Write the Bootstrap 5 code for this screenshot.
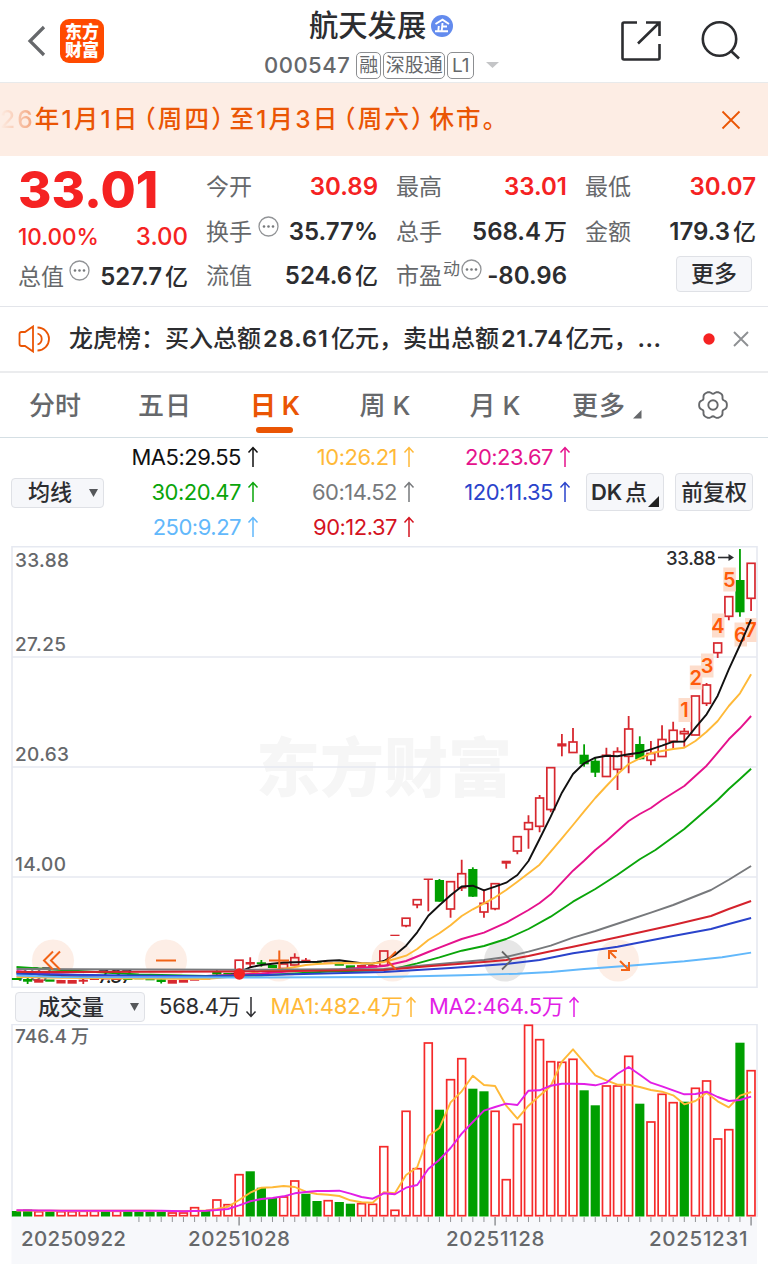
<!DOCTYPE html>
<html lang="zh-CN">
<head>
<meta charset="utf-8">
<meta name="viewport" content="width=device-width, initial-scale=1">
<title>航天发展 000547</title>
<link rel="stylesheet" href="https://cdn.jsdelivr.net/npm/bootstrap@5.3.0/dist/css/bootstrap.min.css">
<style>
body{font-family:Inter,"Noto Sans CJK SC",sans-serif;color:#2c2d30;background:#fff;width:768px;height:1264px;overflow:hidden;font-feature-settings:"calt" 0}
svg{display:block;flex:none}
.topbar{height:83px;border-bottom:1px solid #e8eaeb}
.logo{width:44px;height:44px;border-radius:9px;background:#ff4a00;color:#fff;font-size:17px;font-weight:900;line-height:18px;padding-top:4px;margin-left:12px}
.stockname{font-size:29.3px;line-height:36px;font-weight:500}
.stockmeta{font-size:22px;line-height:28px;color:#66686b;letter-spacing:.5px;font-weight:500}
.tagbox{border:1.5px solid #8c8e91;border-radius:5px;font-size:19px;line-height:25px;height:27px;letter-spacing:0;font-weight:400;text-align:center}
.notice{height:73px;background:#fdede4;color:#ea5504;font-size:24.5px;font-weight:500;letter-spacing:2.15px;line-height:73px;white-space:nowrap}
.notice .fade26{background:linear-gradient(90deg,#fdede4,#f3a47c);-webkit-background-clip:text;color:transparent}
.pl,.pr{font-feature-settings:"halt" 1}
.pl{margin-left:4px}.pr{margin-right:4px}
.quote{height:151px;border-bottom:1px solid #e3e5ea;padding:9px 12px 0 18px;font-size:24px;font-weight:600}
.quote .line{height:44.5px;line-height:44.5px}
.quote .lb{color:#66686b;font-weight:400;font-size:23px}
.quote .cj{font-weight:500;font-size:23px;margin-left:3px}
.up{color:#f52222}
.price{font-size:51px;font-weight:800;line-height:50px;height:50px}
.morebtn{width:76px;height:36px;line-height:35px;font-size:23px;border:1px solid #dfe1e6;border-radius:4px;background:#f6f7fa;font-weight:500}
.news{height:66px;border-bottom:2px solid #ebecee;padding:0 19px 0 18px;font-size:24px;font-weight:500}
.news b{font-weight:600;font-size:23.5px}
.tabs{height:65px;border-bottom:1px solid #d5dfe4;font-size:26px;font-weight:500;color:#66686b;line-height:65px}
.tabs .tab{width:110px;text-align:center}
.tabs .on{color:#ea5504;font-weight:600}
.tabs .on::after{content:"";position:absolute;left:36px;bottom:4px;width:37px;height:6px;border-radius:3px;background:#ea5504}
.malist{height:108px;font-size:22px;line-height:35px;padding-top:2px}
.malist .mc{width:156px;letter-spacing:-.5px}
.pill{background:#f6f7fa;border:1px solid #dfe1e6;border-radius:4px;font-size:22px;font-weight:500;white-space:nowrap}
.volhead{height:36px;font-size:22px;line-height:36px;padding-left:15px}
</style>
</head>
<body>
<header class="topbar d-flex position-relative">
  <div class="d-flex align-items-center" style="padding-left:27px">
    <svg width="21" height="34" viewBox="0 0 21 34"><path d="M17 3 3 17 17 31" fill="none" stroke="#66686b" stroke-width="3.200"/></svg>
    <div class="logo text-center">东方<br>财富</div>
  </div>
  <div class="position-absolute" style="left:264px;top:8px">
    <div class="d-flex align-items-center stockname" style="padding-left:45px">航天发展
      <svg width="22" height="22" viewBox="0 0 22 22" style="margin-left:5px"><circle cx="11" cy="11" r="11" fill="#638bee"/><path d="M4.500 9 11.500 4.700 18 9M11.500 8l-.8 8M11.500 11.500h4.500M7.800 11l-.5 5M4 16.300h13" fill="none" stroke="#fff" stroke-width="1.900"/></svg>
    </div>
    <div class="d-flex align-items-center stockmeta" style="margin-top:7px">000547
      <span class="tagbox" style="margin-left:6px;width:25px">融</span><span class="tagbox" style="margin-left:2px;width:62px">深股通</span><span class="tagbox" style="margin-left:2px;width:27px">L1</span>
      <svg width="13" height="8" style="margin-left:12px"><path d="M0 1H13L6.500 7z" fill="#c4c5c7"/></svg>
    </div>
  </div>
  <div class="d-flex ms-auto align-items-start" style="padding:20px 27px 0 0;gap:39px">
    <svg width="42" height="42" viewBox="0 0 42 42" fill="none" stroke="#2c2d30" stroke-width="2.600"><path d="M17 2.500H4Q2.500 2.500 2.500 4V38Q2.500 39.500 4 39.500H38Q39.500 39.500 39.500 38V24M26 2.500H39.500V16M39.500 2.500 18 23.500"/></svg>
    <svg width="40" height="40" viewBox="0 0 40 40" fill="none" stroke="#2c2d30" stroke-width="2.600"><circle cx="18.500" cy="19" r="16.700"/><path d="M29.500 30.500 38 38.500"/></svg>
  </div>
</header>

<section class="notice d-flex align-items-center">
  <div><span class="fade26">26</span>年1月1日<span class="pl">（</span>周四<span class="pr">）</span>至1月3日<span class="pl">（</span>周六<span class="pr">）</span>休市。</div>
  <svg class="ms-auto" style="margin-right:27px" width="20" height="20"><path d="M1.500 1.500 18.500 18.500M18.500 1.500 1.500 18.500" stroke="#ea5504" stroke-width="1.800"/></svg>
</section>

<section class="quote d-flex">
  <div style="width:170px">
    <div class="price up">33.01</div>
    <div class="d-flex justify-content-between up" style="height:40px;line-height:44px;font-weight:500"><span style="font-size:22.500px">10.00%</span><span>3.00</span></div>
    <div class="d-flex line"><span class="lb">总值</span><svg style="margin:5px 0 0 5px" width="21" height="21"><use href="#dots"/></svg><span class="ms-auto">527.7<span class="cj">亿</span></span></div>
  </div>
  <div style="width:172px;margin-left:18px">
    <div class="d-flex justify-content-between line"><span class="lb">今开</span><span class="up">30.89</span></div>
    <div class="d-flex line"><span class="lb">换手</span><svg style="margin:6px 0 0 6px" width="21" height="21"><use href="#dots"/></svg><span class="ms-auto">35.77%</span></div>
    <div class="d-flex justify-content-between line"><span class="lb">流值</span><span>524.6<span class="cj">亿</span></span></div>
  </div>
  <div style="width:171px;margin-left:18px">
    <div class="d-flex justify-content-between line"><span class="lb">最高</span><span class="up">33.01</span></div>
    <div class="d-flex justify-content-between line"><span class="lb">总手</span><span>568.4<span class="cj">万</span></span></div>
    <div class="d-flex line"><span class="lb">市盈</span><span class="lb" style="font-size:17px;line-height:31px;margin-left:1px">动</span><svg style="margin:5px 0 0 1px" width="21" height="21"><use href="#dots"/></svg><span class="ms-auto">-80.96</span></div>
  </div>
  <div style="width:171px;margin-left:18px">
    <div class="d-flex justify-content-between line"><span class="lb">最低</span><span class="up">30.07</span></div>
    <div class="d-flex justify-content-between line"><span class="lb">金额</span><span>179.3<span class="cj">亿</span></span></div>
    <div class="morebtn text-center ms-auto" style="margin:2px 4px 0 0">更多</div>
  </div>
</section>

<section class="news d-flex align-items-center">
  <svg width="33" height="28" viewBox="0 0 33 28" fill="none" stroke="#ea5504" stroke-width="1.800"><path d="M1.500 9Q1.500 7 3.500 7H7L15 1.500V26.500L7 21H3.500Q1.500 21 1.500 19z"/><path d="M19.500 2.500a11.500 11.500 0 0 1 0 23M19.500 8.500a5.700 5.700 0 0 1 0 11"/></svg>
  <div class="text-nowrap" style="margin-left:18px">龙虎榜：买入总额<b style="margin:0 2px;letter-spacing:1px">28.61</b>亿元，卖出总额<b style="margin:0 2px;letter-spacing:.6px">21.74</b>亿元，<b style="letter-spacing:.5px">...</b></div>
  <svg class="ms-auto" width="12" height="12"><circle cx="6" cy="6" r="5.700" fill="#f52222"/></svg>
  <svg width="16" height="16" style="margin-left:18px"><path d="M1 1 15 15M15 1 1 15" stroke="#8e9093" stroke-width="1.900"/></svg>
</section>

<nav class="tabs d-flex">
  <div class="tab">分时</div><div class="tab" style="letter-spacing:1px">五日</div><div class="tab on position-relative" style="word-spacing:-1px">日 K</div><div class="tab">周 K</div><div class="tab">月 K</div>
  <div class="d-flex" style="margin-left:22px;letter-spacing:1px">更多<svg style="margin:37px 0 0 7px" width="9" height="9"><path d="M8.500 0V8.500H0z" fill="#66686b"/></svg></div>
  <svg style="margin:17px 0 0 55px" width="32" height="30" viewBox="-16 -15 32 30" fill="none" stroke="#66686b" stroke-width="1.900" stroke-linejoin="round"><path id="gear"/><circle r="4.700"/></svg>
</nav>

<section class="malist d-flex">
  <div style="width:104px;padding:38px 0 0 11px"><div class="pill position-relative" style="height:30px;line-height:27px;padding-left:16px">均线<svg class="position-absolute" style="right:5px;top:10px" width="9" height="8"><path d="M0 0H9L4.500 8z" fill="#55575a"/></svg></div></div>
  <div class="mc" id="ma0"></div><div class="mc" id="ma1"></div><div class="mc" id="ma2"></div>
  <div class="d-flex" style="padding:33px 0 0 14px;gap:11px;letter-spacing:-.2px">
    <div class="pill position-relative" style="width:78px;height:38px;line-height:36px;padding-left:4px"><b style="font-weight:600">DK</b><span style="margin-left:3px">点</span><svg class="position-absolute" style="right:4px;bottom:3px" width="11" height="11"><path d="M11 0V11H0z" fill="#222"/></svg></div>
    <div class="pill text-center" style="width:78px;height:38px;line-height:36px">前复权</div>
  </div>
</section>

<svg id="kline" width="768" height="442" viewBox="0 546 768 442"></svg>
<section class="volhead d-flex">
  <div class="pill position-relative" style="width:130px;height:30px;line-height:28px;margin-top:4px;padding-left:22px">成交量<svg class="position-absolute" style="right:5px;top:10px" width="9" height="8"><path d="M0 0H9L4.500 8z" fill="#55575a"/></svg></div>
  <div class="d-flex" style="margin-left:14px;letter-spacing:-.2px">568.4万<svg style="margin:8px 0 0 5px" width="12" height="22"><use href="#arr" transform="rotate(180 6 11)"/></svg></div>
  <div class="d-flex" style="margin-left:13px;color:#ffb938;letter-spacing:-.1px">MA1:482.4万<svg style="margin:8px 0 0 2px" width="12" height="22"><use href="#arr"/></svg></div>
  <div class="d-flex" style="margin-left:12px;color:#e21ee6;letter-spacing:-.3px">MA2:464.5万<svg style="margin:8px 0 0 5px" width="12" height="22"><use href="#arr"/></svg></div>
</section>
<svg id="volume" width="768" height="240" viewBox="0 1024 768 240"></svg>

<svg width="0" height="0" class="position-absolute"><defs>
  <g id="dots"><circle cx="10.500" cy="10.500" r="9.500" fill="none" stroke="#929497" stroke-width="1.300"/><g fill="#77797c"><circle cx="6" cy="10.500" r="1.300"/><circle cx="10.500" cy="10.500" r="1.300"/><circle cx="15" cy="10.500" r="1.300"/></g></g>
  <path id="arr" d="M6 21V1.500M1.500 6.500 6 1.500 10.500 6.500" fill="none" stroke="currentColor" stroke-width="1.500"/>
</defs></svg>

<script src="https://cdn.jsdelivr.net/npm/bootstrap@5.3.0/dist/js/bootstrap.bundle.min.js"></script>
<script>
const X = i => 16.5 + 11.13 * i;
const RED = '#d7282f', GREEN = '#009f00';

// six-lobed settings gear
let gear = '';
for (let a = 0; a < 360; a += 4) {
  const t = a * Math.PI / 180, c = Math.cos(6 * t), r = 12.9 + 1.3 * c - .35 * Math.cos(12 * t);
  gear += (a ? 'L' : 'M') + (r * Math.cos(t)).toFixed(2) + ' ' + (r * Math.sin(t)).toFixed(2);
}
document.getElementById('gear').setAttribute('d', gear + 'z');

// moving-average legend
[[['MA5:29.55','#111'],['30:20.47','#0aa50a'],['250:9.27','#62b8fb']],
 [['10:26.21','#ffb938'],['60:14.52','#77797c'],['90:12.37','#d4131f']],
 [['20:23.67','#e5128c'],['120:11.35','#2a43cb']]].forEach((col, c) => {
  document.getElementById('ma' + c).innerHTML = col.map(([t, k]) =>
    `<div class="d-flex justify-content-end" style="color:${k}">${t}<svg style="margin:6px 1px 0 6px" width="12" height="22"><use href="#arr"/></svg></div>`).join('');
});

// candles: index, direction (h = hollow riser, r = flat riser, g = faller), body top, body bottom, high, low
const candles = [[0,'g',978,980],[1,'g',979,981.7,978,984],[2,'r',979.3,982.7],[3,'g',979.5,981.7],[4,'r',980,983.5],[5,'r',980,983.7],[6,'r',979.7,981.7,979,984],[7,'r',978.5,980],[8,'r',978,979.5],[9,'r',978.5,980],[10,'g',978,980],[11,'g',978,979.3],[12,'g',979,980.3],[13,'g',979.3,982,978,983.5],[14,'r',980,983.7],[15,'r',979.7,982.7],[16,'r',979.3,980.7],[17,'r',978.5,979.5],[18,'g',972,974.5,969,976],[19,'g',973,974.5],
[20,'h',960.2,973],[21,'r',962,964.5,957.3,968],[22,'g',962.3,964.3,960,966.7],[23,'g',965,968],[24,'h',964,968.5],[25,'h',957.7,965,953.3,965],[26,'r',959.7,962.5,958,963],[27,'g',961.5,962.8],[28,'r',962.5,963.7],[29,'g',963.3,965.7],[30,'g',965.3,968.3],[31,'r',965,967.5],[32,'r',965,967.5],[33,'h',951,965.5],[34,'r',934.7,936],[35,'h',918.200,925.7,918,927.3],[36,'h',899.7,904.7,899.3,908.3],[37,'r',878.5,880,879,911.3],[38,'g',880,901.7,879,901.7],[39,'h',881.7,909,881,917.7],[40,'h',873.7,887.7,859.7,891],[41,'g',869,896.7,867.3,897],[42,'h',903.3,912,889.3,917.7],[43,'h',883.7,908.7,883,910.3],[44,'r',860.7,863.7,861,868.7],[45,'h',836.7,851,836,854.3],[46,'h',822.7,829.3,815.3,848.7],[47,'h',798,826.3,795,832.3],[48,'h',767.7,809.5,767,812.3],[49,'r',743.3,746.5,734,756.3],[50,'h',742,752.5,728,753],[51,'g',754.7,764.3,744.3,766.7],[52,'g',760.7,772.7,757.3,777],[53,'h',755.3,776.5,747.7,777],[54,'h',751.7,769.3,747.3,790],[55,'h',729,756.3,716,773.3],[56,'g',744,759.3,736.3,759.5],[57,'h',753.5,760.3,741,765.3],[58,'h',739.5,756.5,725.3,757],[59,'h',730.3,741.3,721.7,749],[60,'h',731.5,733.7,728,746.7],[61,'h',696,735],[62,'h',685,703.3,683,706],[63,'h',643,652.7,642.7,658],[64,'h',596.7,616.3,596.3,620.3],[65,'g',580,612.3,549,616.7],[66,'h',563.3,598.3,563,611]];

// moving averages: flat lists of bar index, y
const averages = [
 ['#62b8fb',[0,975.5,4,977,20,977.5,33,977,40,975.3,45,973.7,48,972,51,969,55,965.7,60,961.3,63.4,957.3,66,952.6]],
 ['#2a43cb',[0,974,10,975.5,17,976.3,24,974.5,33,972,39,968,44,964,47,960,50,953.3,54,946.7,59,936,62.400,929,64,924,66,918]],
 ['#77797c',[0,969,5,969.3,20,969.8,33,969,37,965,42,960,44,957,46,951.7,48,945.7,50,937.7,52,931,55,920,57,912.7,59,905,62.400,890,64,879.7,66,866]],
 ['#d4222c',[0,972,5,972,20,971.5,33,970,37,966.3,42,962,44,960,46,956,48,951.3,50,946.7,54,937.3,59,925,62.400,916,64,909,66,901]],
 ['#0aa50a',[0,967,4,970,11,974.500,17,976,22,975.5,28,971.500,32,970.5,34,968.7,36,963.3,38,957.3,40,950.7,42,946,44,939,46,929,48,916.7,50,901.7,52,889,54,874.7,56,859.3,57.4,850,60,829,63,800,64,789,65,779,66,768.7]],
 ['#e5128c',[0,971,3,974,8,976,17,976,22,973.5,25,971,29,969.5,33,966,35,961,37,952,38,947.7,40,939,42,932.7,44,922.7,46,910,47,903,48,894.3,50,870.7,51,860.7,52,850,53,841,54,831,55,821,56,814,57,808,58,800,60,786,62,765.7,63,752.7,64,739.3,65,728.3,66,716]],
 ['#ffb938',[0,977,6,978,17,979,20,976,22,971,23,969.5,24,969,25,967,26,965,27,964,29,963,32,963.5,33,962,34,959,35,955.7,36,949,37,940,38,933.3,39,925.3,40,916,41,909.3,42,903.3,43,897.3,44,890,45,881.7,46,873.3,47,864.7,48,851.7,49,838.3,50,825,51,811.3,52,798,53,786,54,774.3,55,764,56,758.3,57,753.3,58,751,59,749,60,747.7,61,741,62,731.7,63,721,64,706,65,693.3,66,674.3]],
 ['#111',[0,972.500,3,975.500,6,976,19,976,20,972,21,967.3,22,965,23,963.7,24,962.5,26,962,27,961.7,28,960.7,29,960.3,30,961.7,31,963.3,32,963.7,33,961,34,955,35,945.7,36,932.3,37,915.7,38,905.3,39,895.3,40,886.5,41,885.7,42,890.3,43,886.7,44,882.7,45,875,46,861,47,839,48,816.7,49,792.7,50,774,51,763.3,52,757.7,53,755.7,54,756.3,55,754.3,56,752.7,57,749.3,58,745.7,59,741.7,60,741.5,61,727.7,62,714.3,63,695.7,64,669.3,65,645,66,619.3]]];
const order = [7, 6, 5, 4, 2, 3, 1, 0];
const poly = (a, k, w = 2) => {
  let p = '';
  for (let i = 0; i < a.length; i += 2) p += X(a[i]).toFixed(1) + ',' + a[i + 1] + ' ';
  return `<polyline points="${p}" fill="none" stroke="${k}" stroke-width="${w}" stroke-linejoin="round"/>`;
};
const label = (x, y, t, w, o = '') => `<text x="${x}" y="${y}" textLength="${w}" font-size="19" font-weight="500" fill="#66686b" ${o}>${t}</text>`;

let k = '<text x="256" y="791" font-size="64" font-weight="900" fill="#f6f6f6">东方财富</text>';
k += '<g stroke="#e6e9f1" stroke-width="1.600"><path d="M12 657H757M12 767H757M12 877H757"/><path d="M12 546.800H757V987.300H12z" fill="none"/></g>';
[53,166,279,392.5,618].forEach(x => k += `<circle cx="${x}" cy="960.500" r="21" fill="#fdeee6"/>`);
k += '<circle cx="505" cy="960.500" r="21" fill="#e6e6e6"/>';
k += label(15,567,'33.88',54) + label(15,651,'27.25',51) + label(15,761,'20.63',54) + label(15,871,'14.00',51) + label(17,981,'7.37',35);
k += '<text x="98" y="983" textLength="34" font-size="19" font-weight="500" fill="#222">7.37</text><path d="M97 977H80M84 974.500 80 977 84 979.500" fill="none" stroke="#222" stroke-width="1.500"/>';
candles.forEach(([i, d, t, b, h, l]) => {
  const x = X(i), c = d === 'g' ? GREEN : RED;
  if (h !== undefined) k += d === 'h'
    ? `<path d="M${x} ${h}V${t}M${x} ${b}V${l}" stroke="${c}" stroke-width="1.800"/>`
    : `<path d="M${x} ${h}V${l}" stroke="${c}" stroke-width="1.800"/>`;
  k += d === 'h' ? `<rect x="${x - 3.9}" y="${t}" width="7.800" height="${b - t}" fill="none" stroke="${c}" stroke-width="1.700"/>`
                 : `<rect x="${x - 4.6}" y="${t}" width="9.200" height="${b - t}" fill="${c}"/>`;
});
[[1,684.5,710],[2,695.8,677.5],[3,707,665.5],[4,718,625.5],[5,729.3,579.5],[6,740.5,634.5],[7,751,630]].forEach(([n, x, y]) =>
  k += `<rect x="${x - 6}" y="${y - 12}" width="${n === 7 ? 11.5 : 12.5}" height="24" fill="#fdddcc"/><text x="${x}" y="${y + 7}" text-anchor="middle" font-size="20" font-weight="600" fill="#ff5a0a">${n}</text>`);
order.forEach(n => k += poly(averages[n][1], averages[n][0], 1.9));
k += '<circle cx="239.300" cy="974" r="5.700" fill="#f52222"/>';
k += '<g fill="none" stroke="#f26316" stroke-width="2"><path d="M53 951.500 44 960.500 53 969.500M60 951.500 51 960.500 60 969.500M156 960.500H176M269 960.500H289M279.300 950.500V969M396 951.500 387 960.500 396 969.500"/><path d="M609 959V951H617M609 951 616 958M621 970H629V962M629 970 620 961"/></g>';
k += '<path d="M502 951.500 511 960.500 502 969.500" fill="none" stroke="#666" stroke-width="1.800"/>';
k += '<text x="666" y="564.500" textLength="50" font-size="18.500" font-weight="500" fill="#2c2d30">33.88</text><path d="M718 557.500H732" stroke="#2c2d30" stroke-width="1.600"/><path d="M728.500 554 734 557.500 728.500 561z" fill="#2c2d30"/>';
document.getElementById('kline').innerHTML = k;

// volume bar tops: R = rising (hollow), G = falling (solid)
const vol = 'G1211 G1209.5 R1211.7 G1211.5 R1211.7 R1211.7 R1211.3 R1211.3 G1211 R1211.3 G1211 G1211.3 G1211.3 G1211.3 R1213 R1213 R1207.7 G1211 R1200 R1204.7 R1174.7 G1171.3 G1187.7 G1198 R1197 R1181 G1193.7 G1201 R1200.7 G1202 G1203.7 R1203.7 R1204.3 R1146.7 R1210.3 R1111.3 R1168.7 R1043 G1109.7 R1079.7 R1058.7 G1088.7 G1091.3 R1111.3 R1179.7 R1124.3 R1025.3 R1039.7 R1061.7 R1062.3 R1059.3 G1090.3 G1105.3 R1086 R1086 R1056.3 G1103.7 R1122 R1094.3 R1102.7 G1101.7 R1088.3 R1081 R1139 R1129.7 G1042.7 R1070.7'.split(' ');
const v1 = [1210.5,1210.5,1210.7,1210.7,1210.7,1210.7,1210.7,1210.7,1210.7,1210.7,1210.7,1210.7,1210.7,1211,1211,1211,1211,1210.5,1209,1206.7,1200,1192.7,1187.7,1187.3,1186,1187,1191.7,1194,1194.7,1196,1200.3,1202.3,1202.7,1192.3,1193.3,1175,1167.3,1136,1128,1102.3,1091.3,1075.7,1085,1086,1105.7,1118.7,1105.7,1095.7,1086,1061.7,1049.3,1062.3,1075.3,1080.3,1084.7,1084.7,1087,1090,1091.7,1095.3,1104.3,1101,1092.7,1101.3,1107.3,1095.7,1092];
const v2 = [1210.3,1210.3,1210.5,1210.5,1210.7,1210.7,1210.7,1210.7,1210.7,1210.7,1210.7,1210.7,1210.7,1210.7,1211,1211.3,1211,1210.7,1210,1209,1205.3,1201.3,1199,1198,1196.3,1193.3,1192,1191,1191,1190.7,1193.7,1197,1198.7,1193.3,1194.3,1187.7,1185,1169,1159.7,1148,1133.7,1122,1110.7,1107,1103.7,1105,1090.7,1090.3,1085.7,1083.7,1083.7,1084,1085.3,1082.7,1073.7,1067,1074.7,1082.7,1086.3,1090.3,1094.3,1094,1091.7,1097,1101,1100,1096.7];
let v = '<rect x="11.500" y="1217" width="745.500" height="47" fill="#f7f8fb"/><path d="M12 1217V1024.500H757V1217" fill="none" stroke="#e6e9f1" stroke-width="1.600"/>';
v += label(15,1043,'746.4',52) + '<text x="71" y="1043" font-size="18" font-weight="500" fill="#66686b">万</text>';
vol.forEach((s, i) => {
  const x = X(i), y = +s.slice(1);
  v += s[0] === 'R' ? `<rect x="${x - 3.9}" y="${y}" width="7.800" height="${1215.7 - y}" fill="#fff" stroke="#f52a2a" stroke-width="1.700"/>`
                    : `<rect x="${x - 4.6}" y="${y}" width="9.200" height="${1216.5 - y}" fill="${GREEN}"/>`;
  if (i > 10) v += `<path d="M${x} 1217V${[20,43,66].includes(i) ? 1225.5 : 1222}" stroke="#929497" stroke-width="${[20,43,66].includes(i) ? 1.500 : 1}"/>`;
});
v += poly(v1.flatMap((y, i) => [i, y]), '#ffb938', 1.9) + poly(v2.flatMap((y, i) => [i, y]), '#e21ee6', 1.9);
[[21,'20250922',105],[188,'20251028',102],[446,'20251128',98.5],[649,'20251231',98.5]].forEach(([x, t, w]) =>
  v += `<text x="${x}" y="1245.500" textLength="${w}" font-size="20.500" font-weight="500" fill="#66686b">${t}</text>`);
document.getElementById('volume').innerHTML = v;
</script>
</body>
</html>
